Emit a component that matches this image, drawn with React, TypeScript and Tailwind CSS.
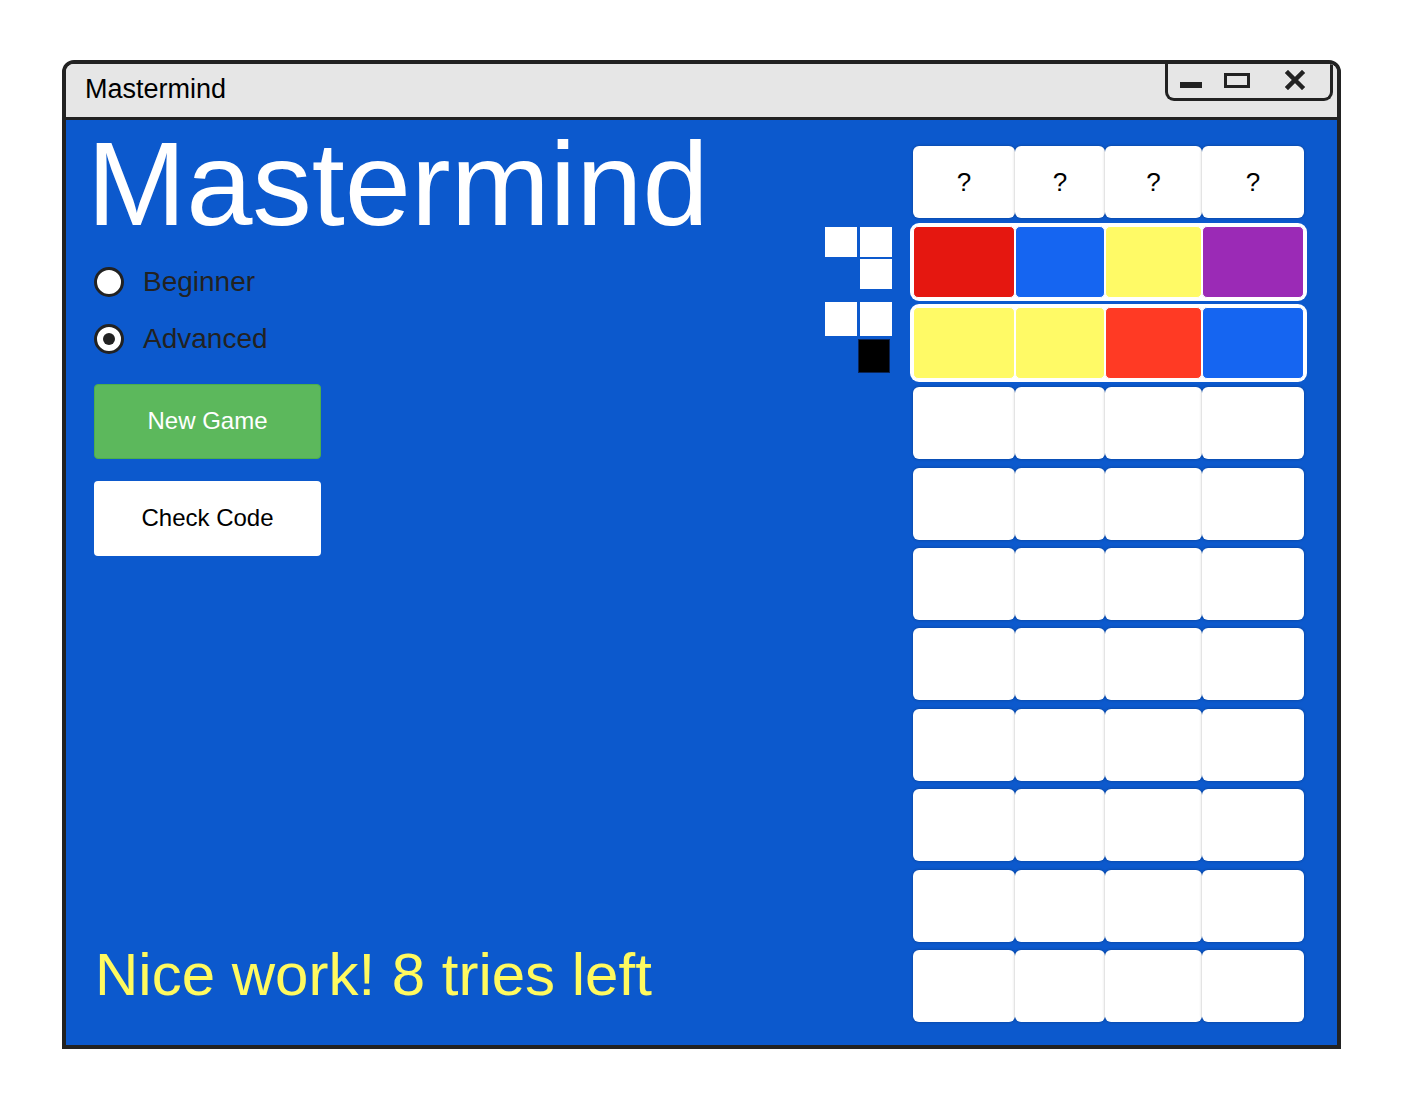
import React from 'react'

type Peg = 'white' | 'black' | null

const CELL_WIDTHS = ['w-[102px]', 'w-[90px]', 'w-[97px]', 'w-[102px]']

const COLORS: Record<string, string> = {
  red: 'bg-[#e51710]',
  blue: 'bg-[#1565f1]',
  yellow: 'bg-[#fffa66]',
  purple: 'bg-[#9b2ab6]',
  orange: 'bg-[#ff3a24]',
}

// two guesses so far, with their feedback pegs
const guesses: { colors: string[]; pegs: Peg[]; pegClass: string }[] = [
  {
    colors: ['red', 'blue', 'yellow', 'purple'],
    pegs: ['white', 'white', null, 'white'],
    pegClass: 'mt-[1px] gap-y-[2px] grid-rows-[30px_30px]',
  },
  {
    colors: ['yellow', 'yellow', 'orange', 'blue'],
    pegs: ['white', 'white', null, 'black'],
    pegClass: '-mt-[5px] gap-y-[3px] grid-rows-[34px_34px]',
  },
]

function Radio({ label, checked }: { label: string; checked?: boolean }) {
  return (
    <div className="flex h-[30px] items-center">
      <div className="flex h-[30px] w-[30px] items-center justify-center rounded-full border-[3px] border-[#222] bg-white">
        {checked && <div className="h-[12px] w-[12px] rounded-full bg-[#222]" />}
      </div>
      <span className="ml-[19px] text-[28px] leading-none text-[#222]">{label}</span>
    </div>
  )
}

function PegGrid({ pegs, className }: { pegs: Peg[]; className: string }) {
  return (
    <div className={`grid grid-cols-[32px_32px] gap-x-[3px] ${className}`}>
      {pegs.map((p, i) =>
        p ? (
          <div
            key={i}
            className={p === 'black' ? '-translate-x-[2px] border border-[#0a2456] bg-black' : 'bg-white'}
          />
        ) : (
          <div key={i} />
        )
      )}
    </div>
  )
}

export default function App() {
  const emptyRows = 8

  return (
    <div className="min-h-[1108px] bg-white pl-[62px] pt-[60px]" style={{ fontFamily: '"Liberation Sans", Arial, sans-serif' }}>
      <div className="w-[1279px] overflow-hidden rounded-t-[12px] border-[4px] border-[#222]">
        {/* Title bar */}
        <div className="relative flex h-[56px] items-center border-b-[3px] border-[#222] bg-[#e6e6e6] pb-[3px] pl-[19px]">
          <span className="text-[27px] leading-none text-black">Mastermind</span>
          <div className="absolute right-[4px] top-0 flex h-[37px] w-[168px] items-start rounded-b-[9px] border-x-[3px] border-b-[3px] border-[#222]">
            <div className="ml-[12px] mt-[18px] h-[6px] w-[22px] bg-[#222]" />
            <div className="ml-[22px] mt-[9px] h-[15px] w-[26px] border-[3px] border-[#222]" />
            <svg className="ml-[35px] mt-[6px]" width="20" height="20" viewBox="0 0 20 20">
              <path d="M3 3 L17 17 M17 3 L3 17" stroke="#222" strokeWidth="4.5" strokeLinecap="square" />
            </svg>
          </div>
        </div>

        {/* Game area */}
        <div className="flex h-[925px] bg-[#0c59cd] pl-[16px] pr-[33px]">
          {/* Left column */}
          <div className="flex flex-1 flex-col pb-[40px] pt-[4px]">
            <h1 className="ml-[5px] text-[119px] font-normal leading-none text-white">Mastermind</h1>
            <div className="ml-[12px] mt-[24px] flex flex-col gap-[27px]">
              <Radio label="Beginner" />
              <Radio label="Advanced" checked />
            </div>
            <div className="ml-[12px] mt-[30px] flex flex-col gap-[22px]">
              <button className="h-[75px] w-[227px] rounded-[4px] border border-[#4cae4c] bg-[#5cb85c] pb-[2px] text-[24px] text-white">
                New Game
              </button>
              <button className="h-[75px] w-[227px] rounded-[4px] bg-white pb-[2px] text-[24px] text-black">
                Check Code
              </button>
            </div>
            <div className="ml-[13px] mt-auto text-[60px] leading-none text-[#fffa5f]">Nice work! 8 tries left</div>
          </div>

          {/* Board */}
          <div className="flex gap-[21px] pt-[26px]">
            <div className="flex w-[67px] flex-col gap-[8.4px]">
              <div className="h-[72px]" />
              {guesses.map((g, i) => (
                <div key={i} className="h-[72px]">
                  <PegGrid pegs={g.pegs} className={g.pegClass} />
                </div>
              ))}
            </div>

            <div className="flex w-[391px] flex-col gap-[8.4px]">
              {/* Secret code */}
              <div className="flex h-[72px]">
                {CELL_WIDTHS.map((w, i) => (
                  <div
                    key={i}
                    className={`${w} flex items-center justify-center rounded-[6px] bg-white text-[26px] text-black shadow-[0_0_3px_rgba(0,0,0,0.3)]`}
                  >
                    ?
                  </div>
                ))}
              </div>

              {guesses.map((g, r) => (
                <div key={r} className="flex h-[72px] rounded-[6px] bg-white ring-[3px] ring-white">
                  {CELL_WIDTHS.map((w, i) => (
                    <div
                      key={i}
                      className={`${w} rounded-[5px] border-[1.5px] border-white ${COLORS[g.colors[i]]}`}
                    />
                  ))}
                </div>
              ))}

              {Array.from({ length: emptyRows }).map((_, r) => (
                <div key={r} className="flex h-[72px]">
                  {CELL_WIDTHS.map((w, i) => (
                    <div key={i} className={`${w} rounded-[6px] bg-white shadow-[0_0_3px_rgba(0,0,0,0.3)]`} />
                  ))}
                </div>
              ))}
            </div>
          </div>
        </div>
      </div>
    </div>
  )
}
